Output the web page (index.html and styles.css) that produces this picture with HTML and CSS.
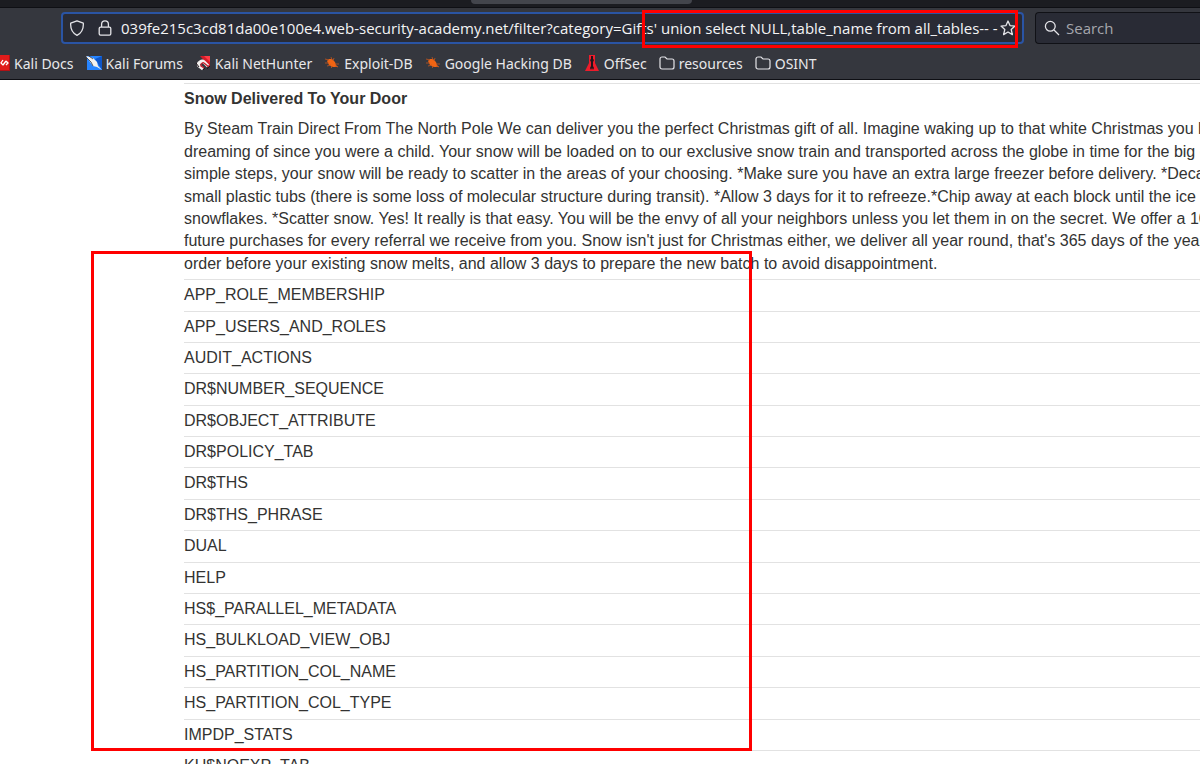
FILE: index.html
```
<!DOCTYPE html>
<html lang="en">
<head>
<meta charset="utf-8">
<title>Snow Delivered To Your Door</title>
<link rel="stylesheet" href="styles.css">
</head>
<body>
<header class="chrome">
  <div class="tabstrip"><div class="tab"></div></div>
  <div class="toolbar">
    <div class="urlbar">
      <svg class="icon" viewBox="0 0 16 16" aria-hidden="true"><path d="M8 .8 14.3 3.1C14.7 9 12.5 13 8 15.3 3.5 13 1.3 9 1.7 3.1Z"/></svg>
      <svg class="icon lock" viewBox="0 0 16 16" aria-hidden="true"><rect x="2.2" y="7.2" width="11.6" height="8" rx="1.4"/><path d="M4.6 7V4.2a3.4 3.4 0 0 1 6.8 0V7"/></svg>
      <input class="address" type="text" aria-label="Address" value="039fe215c3cd81da00e100e4.web-security-academy.net/filter?category=Gifts' union select NULL,table_name from all_tables-- -">
      <button class="star" type="button" aria-label="Bookmark this page"><svg class="icon" viewBox="0 0 16 16" aria-hidden="true"><path d="m8 1 2 4.6 5 .5-3.8 3.4 1.2 5.1L8 12l-4.4 2.6 1.2-5.1L1 6.1l5-.5Z"/></svg></button>
      <div class="mark mark-query"></div>
    </div>
    <label class="searchbar">
      <svg class="icon" viewBox="0 0 16 16" aria-hidden="true"><circle cx="6.3" cy="6.3" r="4.9"/><path d="m10 10 5 5"/></svg>
      <input class="search" type="text" placeholder="Search" aria-label="Search">
    </label>
  </div>
  <nav class="bookmarks">
    <a href="#"><svg class="fav" viewBox="0 0 16 16"><path fill="#e01b1b" d="M0 0h16v16H0z"/><path fill="#b01216" d="M15 0h1v16H0v-1h15z"/><path d="m9 5-2 3 2 2M9 10l3-4M12 6l2 2-2 2" fill="none" stroke="#fff" stroke-width="1.3"/></svg>Kali Docs</a>
    <a href="#"><svg class="fav" viewBox="0 0 16 16"><path fill="#2684ff" d="M1 1h15v14H1z"/><path fill="#0d55c9" d="m9 4 7-3v14z"/><path fill="#f3f1ee" d="M0 1 7 3l4 4 1 4 4 4-5-3-4-1-3-4z"/><path d="m1 3 4 4 2 4M3 1l4 3" fill="none" stroke="#343841" stroke-width=".8"/></svg>Kali Forums</a>
    <a href="#"><svg class="fav" viewBox="0 0 16 16"><path fill="#d51c29" d="M5 1h10v11z"/><path fill="#ff3b45" d="M9 1h6v6z"/><path d="m13 11-4-4C7 5 2 8 4 11l4 3" fill="none" stroke="#f4f1ef" stroke-width="3.2"/><path d="m14 12-5-4C8 7 5 9 6 11l3 2" fill="none" stroke="#c91e2b" stroke-width="1.3"/><path d="m1 8 3 4M8 15l2-2M12 14l3-3" stroke="#20151b" stroke-width="1"/></svg>Kali NetHunter</a>
    <a href="#"><svg class="fav" viewBox="0 0 16 16"><path fill="#f06413" d="m3 6 2-2 3 0 3 3 1 3 2 2-3 0-3 0-3-2z"/><path d="m1 4 4 1M7 2l1 3M10 3l-1 3M1 8l4 0M3 11l4-1M7 13l2-2M15 9l-4 0M14 12l-3-1" stroke="#c2571e" stroke-width=".8"/></svg>Exploit-DB</a>
    <a href="#"><svg class="fav" viewBox="0 0 16 16"><path fill="#f06413" d="m3 6 2-2 3 0 3 3 1 3 2 2-3 0-3 0-3-2z"/><path d="m1 4 4 1M7 2l1 3M10 3l-1 3M1 8l4 0M3 11l4-1M7 13l2-2M15 9l-4 0M14 12l-3-1" stroke="#c2571e" stroke-width=".8"/></svg>Google Hacking DB</a>
    <a href="#"><svg class="fav" viewBox="0 0 16 16"><path fill="#ed1c2b" d="M5 0h6v8l4 8H1l4-8z"/><path fill="#20151b" d="M7 1h2v3l1 1-1 2v4l1 2-1 2-1-2-1 2-1-2 1-2V7L6 5l1-1z"/></svg>OffSec</a>
    <a href="#"><svg class="fav folder" viewBox="0 0 16 16"><path d="M1 4a2 2 0 0 1 2-2h3l2 2h5a2 2 0 0 1 2 2v6a2 2 0 0 1-2 2H3a2 2 0 0 1-2-2Z"/></svg>resources</a>
    <a href="#"><svg class="fav folder" viewBox="0 0 16 16"><path d="M1 4a2 2 0 0 1 2-2h3l2 2h5a2 2 0 0 1 2 2v6a2 2 0 0 1-2 2H3a2 2 0 0 1-2-2Z"/></svg>OSINT</a>
  </nav>
</header>
<main class="page">
  <table class="results">
    <tbody>
      <tr><th>Snow Delivered To Your Door</th>
      <td>By Steam Train Direct From The North Pole We can deliver you the perfect Christmas gift of all. Imagine waking up to that white Christmas you have been<br>
      dreaming of since you were a child. Your snow will be loaded on to our exclusive snow train and transported across the globe in time for the big day. In a few<br>
      simple steps, your snow will be ready to scatter in the areas of your choosing. *Make sure you have an extra large freezer before delivery. *Decant the liquid into<br>
      small plastic tubs (there is some loss of molecular structure during transit). *Allow 3 days for it to refreeze.*Chip away at each block until the ice resembles<br>
      snowflakes. *Scatter snow. Yes! It really is that easy. You will be the envy of all your neighbors unless you let them in on the secret. We offer a 10% discount on<br>
      future purchases for every referral we receive from you. Snow isn't just for Christmas either, we deliver all year round, that's 365 days of the year. Remember to<br>
      order before your existing snow melts, and allow 3 days to prepare the new batch to avoid disappointment.</td></tr>
      <tr><td>APP_ROLE_MEMBERSHIP</td></tr>
      <tr><td>APP_USERS_AND_ROLES</td></tr>
      <tr><td>AUDIT_ACTIONS</td></tr>
      <tr><td>DR$NUMBER_SEQUENCE</td></tr>
      <tr><td>DR$OBJECT_ATTRIBUTE</td></tr>
      <tr><td>DR$POLICY_TAB</td></tr>
      <tr><td>DR$THS</td></tr>
      <tr><td>DR$THS_PHRASE</td></tr>
      <tr><td>DUAL</td></tr>
      <tr><td>HELP</td></tr>
      <tr><td>HS$_PARALLEL_METADATA</td></tr>
      <tr><td>HS_BULKLOAD_VIEW_OBJ</td></tr>
      <tr><td>HS_PARTITION_COL_NAME</td></tr>
      <tr><td>HS_PARTITION_COL_TYPE</td></tr>
      <tr><td>IMPDP_STATS</td></tr>
      <tr><td>KU$NOEXP_TAB</td></tr>
    </tbody>
  </table>
  <div class="mark mark-tables"></div>
</main>
</body>
</html>
```
FILE: styles.css
```
* { box-sizing: border-box; }

body {
  display: flex;
  flex-direction: column;
  height: 100vh;
  margin: 0;
  overflow: hidden;
  background: #fff;
  font-family: "Liberation Sans", Arial, sans-serif;
}

.chrome {
  flex: none;
  background: #35373e;
  border-bottom: 1px solid #0e0f14;
  color: #e8e8ea;
  font-family: "Noto Sans", sans-serif;
  font-size: 14px;
}

.tabstrip {
  height: 8px;
  padding-left: 471px;
  background: #1b1c21;
  border-bottom: 1px solid #0e0f14;
}

.tab {
  width: 221px;
  height: 4px;
  border-radius: 0 0 4px 4px;
  background: #43454c;
}

.toolbar {
  display: flex;
  gap: 11px;
  padding: 4px 0 4px 61px;
}

.urlbar,
.searchbar {
  display: flex;
  align-items: center;
  height: 32px;
  border-radius: 4px;
  background: #292b35;
}

.urlbar {
  position: relative;
  flex: 1;
  padding: 0 6px;
  border: 2px solid #2a54a4;
}

.searchbar {
  flex: none;
  width: 165px;
  gap: 6px;
  padding: 0 8px;
  border: 1px solid #101116;
  border-right: 0;
  border-radius: 4px 0 0 4px;
}

.icon {
  display: block;
  flex: none;
  width: 16px;
  height: 16px;
  fill: none;
  stroke: #e4e4e8;
  stroke-width: 1.3;
  stroke-linejoin: round;
}

.lock { margin: 0 8px 0 12px; }

.address,
.search {
  flex: 1;
  min-width: 0;
  height: 28px;
  padding: 0;
  border: 0;
  outline: 0;
  background: none;
  color: #f4f4f6;
  font-family: "Open Sans", "Noto Sans", sans-serif;
  font-size: 15px;
}

.search::placeholder { color: #a5a6ac; opacity: 1; }

.star {
  padding: 0;
  border: 0;
  background: none;
}

.bookmarks {
  display: flex;
  gap: 12px;
  height: 31px;
  margin-left: -6px;
  padding-bottom: 1px;
  align-items: center;
  white-space: nowrap;
}

.bookmarks a {
  display: flex;
  align-items: center;
  gap: 4px;
  color: inherit;
  text-decoration: none;
}

.fav {
  flex: none;
  width: 16px;
  height: 16px;
}

.folder {
  fill: none;
  stroke: #e4e4e8;
  stroke-width: 1.2;
}

.page {
  position: relative;
  flex: 1;
  min-height: 0;
  padding: 3px 0 0 184px;
  overflow: hidden;
}

.results,
.results tbody,
.results tr,
.results th,
.results td { display: block; }

.results {
  color: #333332;
  font-size: 16px;
  line-height: 1.4;
  white-space: nowrap;
}

.results tr { border-top: 1px solid #e2e2e2; }

.results th,
.results td {
  padding: 4px 0;
  text-align: left;
}

/* Red annotation frames laid over the page */
.mark {
  position: absolute;
  border: 3px solid #f00;
  pointer-events: none;
}

.mark-query {
  top: -4px;
  right: 4px;
  width: 376px;
  height: 38px;
}

.mark-tables {
  top: 171px;
  left: 91px;
  width: 661px;
  height: 500px;
}
```
